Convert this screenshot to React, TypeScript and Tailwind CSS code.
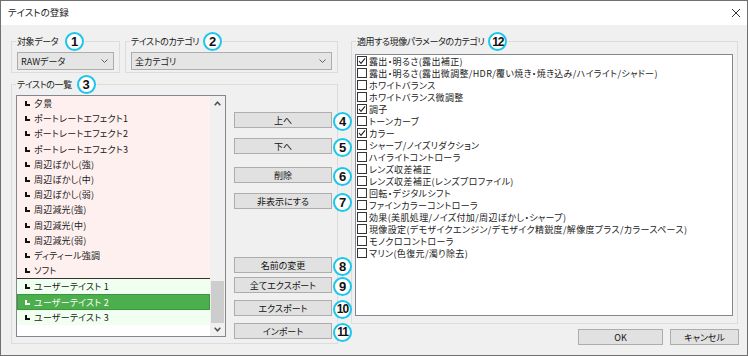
import React from 'react';

const presetTastes = [
  '夕景',
  'ポートレートエフェクト1',
  'ポートレートエフェクト2',
  'ポートレートエフェクト3',
  '周辺ぼかし(強)',
  '周辺ぼかし(中)',
  '周辺ぼかし(弱)',
  '周辺減光(強)',
  '周辺減光(中)',
  '周辺減光(弱)',
  'ディティール強調',
  'ソフト',
];

const userTastes = ['ユーザーテイスト 1', 'ユーザーテイスト 2', 'ユーザーテイスト 3'];

const categories: [string, boolean][] = [
  ['露出・明るさ(露出補正)', true],
  ['露出・明るさ(露出微調整/HDR/覆い焼き・焼き込み/ハイライト/シャドー)', false],
  ['ホワイトバランス', false],
  ['ホワイトバランス微調整', false],
  ['調子', true],
  ['トーンカーブ', false],
  ['カラー', true],
  ['シャープ/ノイズリダクション', false],
  ['ハイライトコントローラ', false],
  ['レンズ収差補正', false],
  ['レンズ収差補正(レンズプロファイル)', false],
  ['回転・デジタルシフト', false],
  ['ファインカラーコントローラ', false],
  ['効果(美肌処理/ノイズ付加/周辺ぼかし・シャープ)', false],
  ['現像設定(デモザイクエンジン/デモザイク精鋭度/解像度プラス/カラースペース)', false],
  ['モノクロコントローラ', false],
  ['マリン(色復元/濁り除去)', false],
];

// cyan numbered marker drawn over the dialog
const Num = ({ n, className = '' }: { n: number; className?: string }) => (
  <span
    className={`relative z-10 flex h-[19px] w-[19px] shrink-0 items-center justify-center rounded-full border-2 border-[#1cc6ea] bg-white font-['Liberation_Sans',Arial,sans-serif] font-bold leading-none text-[#111] ${
      n > 9 ? 'text-[12px] tracking-[-1px]' : 'text-[13px]'
    } ${className}`}
  >
    {n}
  </span>
);

const Chevron = () => (
  <svg width="7" height="4" viewBox="0 0 7 4">
    <polyline points="0.5,0.5 3.5,3.5 6.5,0.5" fill="none" stroke="#606060" strokeWidth="1" />
  </svg>
);

const Combo = ({ label }: { label: string }) => (
  <div className="mt-[1px] flex h-[18px] items-center justify-between border border-[#adadad] bg-[#e5e5e5] pl-[3px] pr-[5px]">
    <span className="leading-none">{label}</span>
    <Chevron />
  </div>
);

const Bullet = ({ light }: { light?: boolean }) => (
  <svg width="5" height="5" viewBox="0 0 5 5" className="shrink-0">
    <rect x="0" y="0" width="2" height="5" fill={light ? '#fff' : '#111'} />
    <rect x="0" y="3" width="5" height="2" fill={light ? '#fff' : '#111'} />
  </svg>
);

const Btn = ({ label, className = '' }: { label: string; className?: string }) => (
  <button
    className={`h-[16px] border border-[#adadad] bg-[#e1e1e1] text-[9px] leading-none text-[#111] ${className}`}
  >
    {label}
  </button>
);

const Check = ({ on }: { on: boolean }) => (
  <span className="flex h-[10px] w-[10px] shrink-0 items-center justify-center border border-[#333] bg-white">
    {on && (
      <svg width="8" height="8" viewBox="0 0 8 8">
        <polyline points="1,4 3,6.3 7,1.3" fill="none" stroke="#222" strokeWidth="1.1" />
      </svg>
    )}
  </span>
);

const Legend = ({ label, n, gap, className = '' }: { label: string; n: number; gap: string; className?: string }) => (
  <legend className={`px-[1px] ${className}`}>
    <span className="flex items-center">
      <span className="leading-none tracking-[-0.4px]">{label}</span>
      <Num n={n} className={gap} />
    </span>
  </legend>
);

const sideButtons: { label: string; n: number; mt: string }[] = [
  { label: '上へ', n: 4, mt: 'mt-0' },
  { label: '下へ', n: 5, mt: 'mt-[10px]' },
  { label: '削除', n: 6, mt: 'mt-[13px]' },
  { label: '非表示にする', n: 7, mt: 'mt-[10px]' },
  { label: '名前の変更', n: 8, mt: 'mt-[48px]' },
  { label: '全てエクスポート', n: 9, mt: 'mt-[4px]' },
  { label: 'エクスポート', n: 10, mt: 'mt-[7px]' },
  { label: 'インポート', n: 11, mt: 'mt-[7px]' },
];

export default function App() {
  return (
    <div className="flex h-[356px] w-[748px] flex-col border border-[#707070] bg-[#f0f0f0] font-['Noto_Sans_CJK_JP',sans-serif] text-[9px] text-[#1a1a1a] [font-feature-settings:'palt']">
      {/* Title bar */}
      <div className="flex h-[24px] shrink-0 items-center justify-between bg-white pl-[7px] pr-[7px]">
        <span className="text-[9.5px] leading-none">テイストの登録</span>
        <svg width="8" height="8" viewBox="0 0 8 8">
          <path d="M0 0L8 8M8 0L0 8" stroke="#333" strokeWidth="1" />
        </svg>
      </div>

      <div className="flex flex-1 gap-[13px] pl-[10px] pr-[9px] pt-[7px]">
        {/* Left column */}
        <div className="flex w-[327px] shrink-0 flex-col">
          <div className="flex gap-[5px]">
            <fieldset className="w-[109px] min-w-0 border border-[#dcdcdc] px-[5px] pb-[2px]">
              <Legend label="対象データ" n={1} gap="ml-[7px]" className="-ml-[1px]" />
              <Combo label="RAWデータ" />
            </fieldset>
            <fieldset className="min-w-0 flex-1 border border-[#dcdcdc] px-[5px] pb-[2px]">
              <Legend label="テイストのカテゴリ" n={2} gap="ml-[4px]" className="-ml-[1px]" />
              <Combo label="全カテゴリ" />
            </fieldset>
          </div>

          <fieldset className="mt-[2px] min-w-0 border border-[#dcdcdc] pb-[4px] pl-[4px] pr-[4px]">
            <Legend label="テイストの一覧" n={3} gap="ml-[5px]" />
            <div className="flex items-start">
              {/* list box */}
              <div className="mt-[1px] flex h-[242px] w-[210px] shrink-0 border border-[#828790] bg-white">
                <div className="flex w-[193px] flex-col tracking-[0.2px]">
                  <div className="border-b border-[#333] bg-[#fff0f0]">
                    {presetTastes.map((t) => (
                      <div key={t} className="flex h-[15.2px] items-center pl-[8px]">
                        <Bullet />
                        <span className="ml-[4px] whitespace-nowrap leading-none">{t}</span>
                      </div>
                    ))}
                  </div>
                  <div className="bg-[#f0fff0]">
                    {userTastes.map((t, i) => (
                      <div
                        key={t}
                        className={`flex h-[15.2px] items-center pl-[8px] ${
                          i === 1 ? 'bg-[#4cae4c] text-white shadow-[inset_0_0_0_1px_#3d963d]' : ''
                        }`}
                      >
                        <Bullet light={i === 1} />
                        <span className="ml-[4px] whitespace-nowrap leading-none">{t}</span>
                      </div>
                    ))}
                  </div>
                </div>
                {/* scrollbar */}
                <div className="flex w-[15px] flex-col bg-[#f0f0f0]">
                  <div className="flex h-[15px] items-center justify-center">
                    <svg width="7" height="5" viewBox="0 0 7 5">
                      <polyline points="0.7,4.3 3.5,1.2 6.3,4.3" fill="none" stroke="#505050" strokeWidth="1.5" />
                    </svg>
                  </div>
                  <div className="flex flex-1 flex-col justify-end px-[1px]">
                    <div className="h-[42px] bg-[#cdcdcd]" />
                  </div>
                  <div className="flex h-[13px] items-center justify-center">
                    <svg width="7" height="5" viewBox="0 0 7 5">
                      <polyline points="0.7,0.7 3.5,3.8 6.3,0.7" fill="none" stroke="#505050" strokeWidth="1.5" />
                    </svg>
                  </div>
                </div>
              </div>

              {/* side buttons */}
              <div className="ml-[8px] flex flex-col pt-[18px]">
                {sideButtons.map((b) => (
                  <div key={b.n} className={`flex h-[16px] items-center gap-[1px] ${b.mt}`}>
                    <Btn label={b.label} className="w-[98px]" />
                    <Num n={b.n} className="mt-[2px]" />
                  </div>
                ))}
              </div>
            </div>
          </fieldset>
        </div>

        {/* Right column */}
        <div className="flex w-[387px] shrink-0 flex-col">
          <fieldset className="min-w-0 border border-[#dcdcdc] pb-[7px] pl-[3px] pr-[4px]">
            <Legend label="適用する現像パラメータのカテゴリ" n={12} gap="ml-[4px]" className="ml-[1px]" />
            <div className="mt-[3px] h-[262px] border border-[#828790] bg-white">
              {categories.map(([label, on]) => (
                <div key={label} className="flex h-[12px] items-center pl-[1px]">
                  <Check on={on} />
                  <span className="ml-[2px] whitespace-nowrap leading-none tracking-[0.35px]">{label}</span>
                </div>
              ))}
            </div>
          </fieldset>
          <div className="-mr-[1px] mt-[5px] flex justify-end gap-[7px]">
            <Btn label="OK" className="w-[85px] border-[#0078d7]" />
            <Btn label="キャンセル" className="w-[69px]" />
          </div>
        </div>
      </div>
    </div>
  );
}
